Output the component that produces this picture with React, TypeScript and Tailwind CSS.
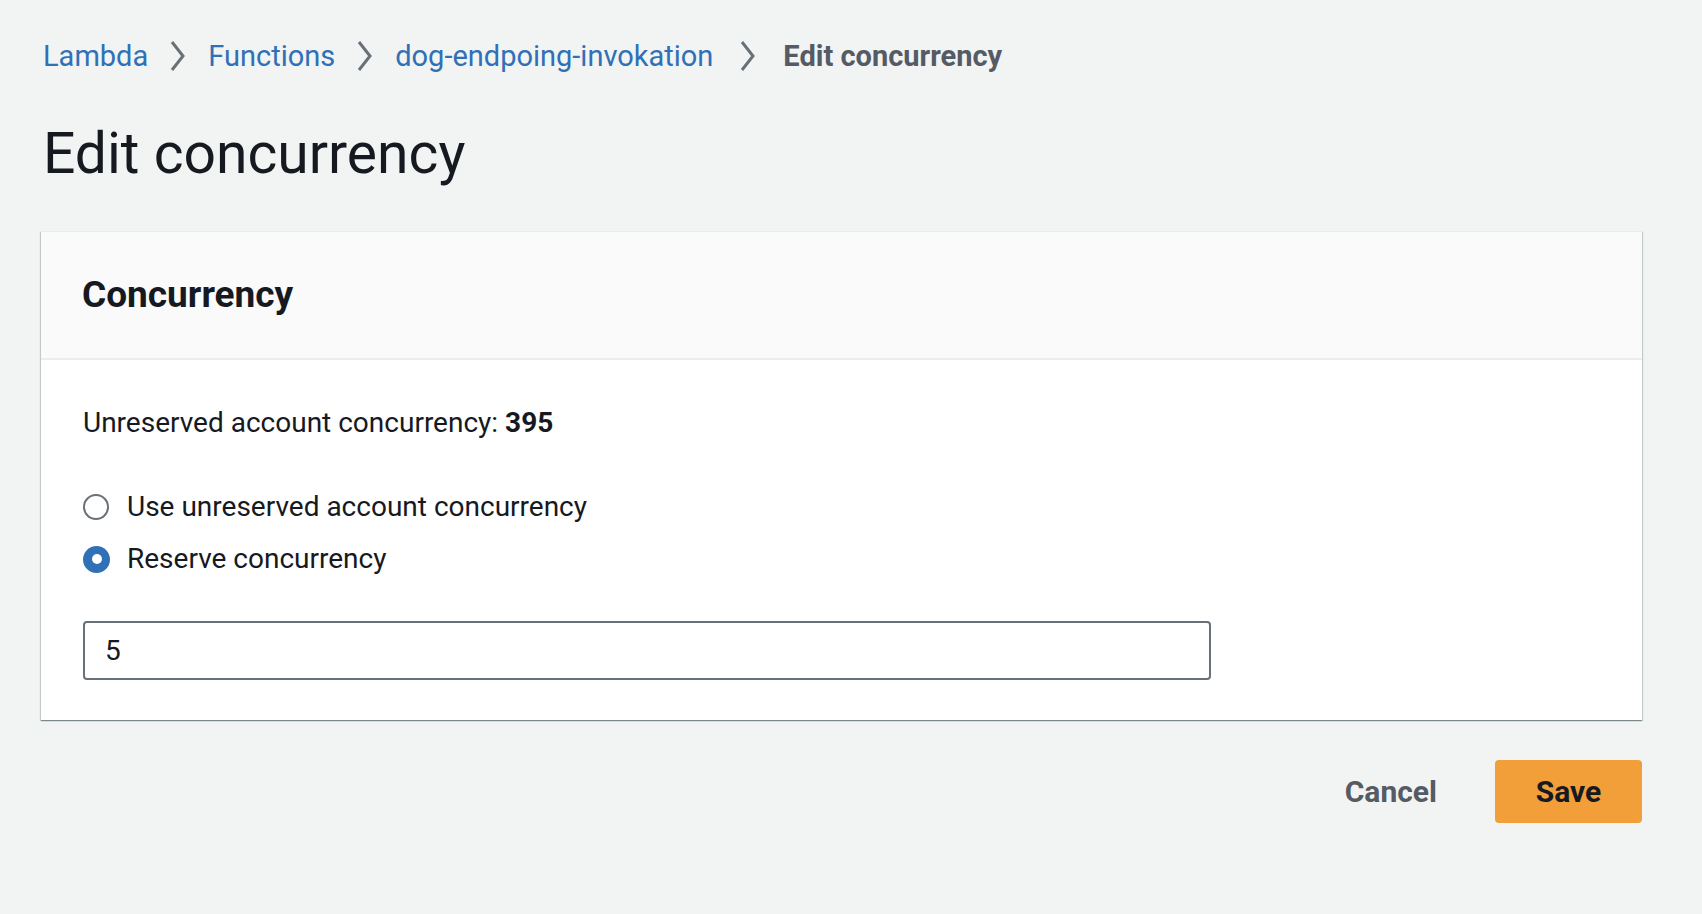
import React from "react";

function Chevron() {
  return (
    <svg width="20" height="32" viewBox="0 0 20 32" className="shrink-0">
      <path d="M4 2 L15 16 L4 30" fill="none" stroke="#687078" strokeWidth="3" strokeLinecap="butt" strokeLinejoin="miter" />
    </svg>
  );
}

export default function App() {
  return (
    <div
      className="min-h-screen w-full bg-[#f2f3f3] pl-[41px] pr-[60px]"
      style={{ fontFamily: "Roboto, 'Open Sans', sans-serif" }}
    >
      <nav className="flex items-center pt-[36px] h-[76px] text-[29px] leading-[40px]">
        <a className="ml-[2px] text-[#2f70b7]">Lambda</a>
        <span className="mx-[20px] flex items-center"><Chevron /></span>
        <a className="text-[#2f70b7]">Functions</a>
        <span className="mx-[20px] flex items-center"><Chevron /></span>
        <a className="text-[#2f70b7]">dog-endpoing-invokation</a>
        <span className="mx-[25px] flex items-center"><Chevron /></span>
        <span className="font-bold text-[#545b64]">Edit concurrency</span>
      </nav>

      <h1 className="mt-[46px] ml-[2px] text-[57px] leading-[64px] font-normal text-[#16191f]">
        Edit concurrency
      </h1>

      <section className="mt-[45px] bg-white shadow-[0_1px_1px_0_rgba(0,28,36,0.3),1px_1px_1px_0_rgba(0,28,36,0.15),-1px_1px_1px_0_rgba(0,28,36,0.15)] border-t border-[#eaeded]">
        <header className="h-[128px] flex items-center px-[41px] bg-[#fafafa] border-b-2 border-[#eaeded]">
          <h2 className="text-[37px] font-bold text-[#16191f]">Concurrency</h2>
        </header>
        <div className="px-[42px] pt-[43px] pb-[40px] text-[28px] text-[#16191f]">
          <p className="leading-[40px]">
            Unreserved account concurrency: <span className="font-bold">395</span>
          </p>
          <div className="mt-[44px] flex flex-col gap-[12px]">
            <label className="flex items-center h-[40px]">
              <span className="w-[26px] h-[26px] rounded-full border-2 border-[#687078] bg-white shrink-0" />
              <span className="ml-[18px]">Use unreserved account concurrency</span>
            </label>
            <label className="flex items-center h-[40px]">
              <span className="w-[27px] h-[27px] rounded-full bg-[#2f70b7] flex items-center justify-center shrink-0">
                <span className="w-[10px] h-[10px] rounded-full bg-white" />
              </span>
              <span className="ml-[17px]">Reserve concurrency</span>
            </label>
          </div>
          <div className="mt-[42px] w-[1128px] h-[59px] border-2 border-[#687078] rounded-[4px] flex items-center px-[20px]">
            5
          </div>
        </div>
      </section>

      <div className="mt-[40px] flex justify-end items-center">
        <button className="text-[30px] font-bold text-[#545b64] mr-[58px]">Cancel</button>
        <button className="w-[147px] h-[63px] rounded-[4px] bg-[#f29e39] text-[30px] font-bold text-[#16191f]">
          Save
        </button>
      </div>
    </div>
  );
}
